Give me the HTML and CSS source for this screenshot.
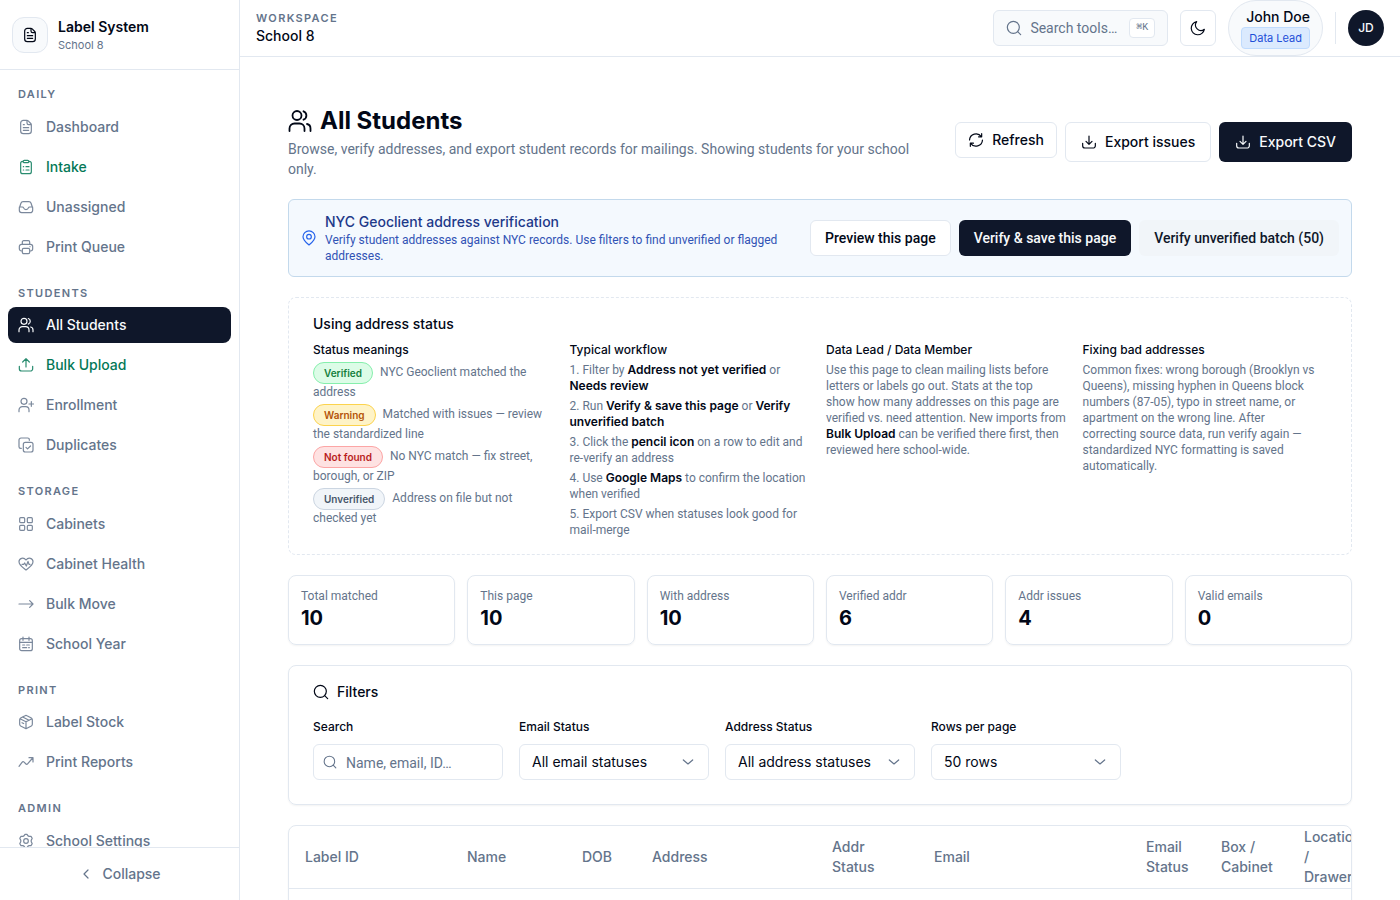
FILE: index.html
```html
<!DOCTYPE html>
<html lang="en">
<head>
<meta charset="utf-8">
<title>All Students – Label System</title>
<link rel="stylesheet" href="styles.css">
</head>
<body>
<svg class="sprite" aria-hidden="true">
  <symbol id="i-file" viewBox="0 0 24 24"><path d="M4 6a4 4 0 0 1 4-4h5.2a3 3 0 0 1 2.1.9l3.8 3.8A3 3 0 0 1 20 8.800V18a4 4 0 0 1-4 4H8a4 4 0 0 1-4-4ZM13.500 2.500V6a2.500 2.500 0 0 0 2.500 2.500h3.500M8 17h8M8 13h8M8 8.500h1.500"/></symbol>
  <symbol id="i-clip" viewBox="0 0 24 24"><path d="M8 3.500H7a3 3 0 0 0-3 3V19a3 3 0 0 0 3 3h10a3 3 0 0 0 3-3V6.500a3 3 0 0 0-3-3h-1M9.500 2h5a1.750 1.750 0 0 1 0 3.500h-5a1.750 1.750 0 0 1 0-3.500ZM8 11.500h.5M8 16.500h.5M12 11.500h4.500M12 16.500h4.500"/></symbol>
  <symbol id="i-inbox" viewBox="0 0 24 24"><path d="M2 13.500 4.400 6.300A3.500 3.500 0 0 1 7.700 4h8.600a3.500 3.500 0 0 1 3.300 2.300L22 13.500V17a3.500 3.500 0 0 1-3.500 3.500h-13A3.500 3.500 0 0 1 2 17Zm0-1.500h4.500a2 2 0 0 1 1.900 1.300 3.800 3.800 0 0 0 7.200 0A2 2 0 0 1 17.500 12H22"/></symbol>
  <symbol id="i-print" viewBox="0 0 24 24"><path d="M6.500 18H5.200A3.200 3.200 0 0 1 2 14.800v-3.600A3.200 3.200 0 0 1 5.200 8h13.600a3.200 3.200 0 0 1 3.200 3.200v3.600a3.200 3.200 0 0 1-3.200 3.200h-1.300M6.500 8V4.500a2 2 0 0 1 2-2h7a2 2 0 0 1 2 2V8M8.500 14h7a2 2 0 0 1 2 2v4a2 2 0 0 1-2 2h-7a2 2 0 0 1-2-2v-4a2 2 0 0 1 2-2ZM18 11.500h.01"/></symbol>
  <symbol id="i-users" viewBox="0 0 24 24"><circle cx="9" cy="6.500" r="4.500"/><path d="M1.500 22v-2.500a5 5 0 0 1 5-5h5a5 5 0 0 1 5 5V22M15.500 2.300a4.500 4.500 0 0 1 0 8.400M19 15a4.500 4.500 0 0 1 3.500 4.500V22"/></symbol>
  <symbol id="i-upload" viewBox="0 0 24 24"><path d="M12 15V2.500M7 7.500l5-5 5 5M2 14v3.500A3.500 3.500 0 0 0 5.500 21h13a3.500 3.500 0 0 0 3.500-3.500V14"/></symbol>
  <symbol id="i-download" viewBox="0 0 24 24"><path d="M12 3v12.500M7.500 11l4.500 4.500 4.500-4.500M2.500 14v3.500A3.500 3.500 0 0 0 6 21h12a3.500 3.500 0 0 0 3.500-3.500V14"/></symbol>
  <symbol id="i-useradd" viewBox="0 0 24 24"><circle cx="9" cy="6.500" r="4.500"/><path d="M1.500 22v-2.500a5 5 0 0 1 5-5h5a5 5 0 0 1 5 5V22M16.500 10.500h7M20 7v7"/></symbol>
  <symbol id="i-copy" viewBox="0 0 24 24"><rect x="8" y="8" width="14.500" height="14.500" rx="3"/><path d="M17 5V4a2.500 2.500 0 0 0-2.500-2.500H4.500a3 3 0 0 0-3 3v10A2.500 2.500 0 0 0 4 17h1M12 15.500l2.300 2.300 4.500-4.300"/></symbol>
  <symbol id="i-grid" viewBox="0 0 24 24"><rect x="2.500" y="2.500" width="7.500" height="7.500" rx="1.500"/><rect x="14" y="2.500" width="7.500" height="7.500" rx="1.500"/><rect x="2.500" y="14" width="7.500" height="7.500" rx="1.500"/><rect x="14" y="14" width="7.500" height="7.500" rx="1.500"/></symbol>
  <symbol id="i-heart" viewBox="0 0 24 24"><path d="M12 21C8 18 1.500 14 1.500 8.800 1.500 3 8.500 1.500 12 6c3.500-4.500 10.500-3 10.500 2.800C22.500 14 16 18 12 21ZM6 12.500h2.500l1.500-2 2.500 4.500 2.500-7 1.500 4.500H18"/></symbol>
  <symbol id="i-arrow" viewBox="0 0 24 24"><path d="M1.500 12h21M17.500 7l5 5-5 5"/></symbol>
  <symbol id="i-cal" viewBox="0 0 24 24"><rect x="2.500" y="4" width="19" height="18" rx="3"/><path d="M7.500 1.500v5M16.500 1.500v5M2.500 9.500h19M7 13.500h3M13 13.500h4M7 17.500h6M16 17.500h1"/></symbol>
  <symbol id="i-box" viewBox="0 0 24 24"><path d="M12 22 4 18a3 3 0 0 1-1.500-2.500v-7A3 3 0 0 1 4 6l6.500-3.500a3 3 0 0 1 3 0L20 6a3 3 0 0 1 1.500 2.500v7A3 3 0 0 1 20 18ZM3 7l9 4.500L21 7M12 11.500V22M7 4.500l9.500 5M6 13l2.500 1.300"/></symbol>
  <symbol id="i-trend" viewBox="0 0 24 24"><path d="M1.500 18.500 6 12.500c1.200-1.500 2-1.400 3.200-.2l2.300 2.300c1.200 1.200 2 1.200 3.200-.2L22 6M16.500 5.500H22.500V12"/></symbol>
  <symbol id="i-gear" viewBox="0 0 24 24"><path d="m9.500 3.500 1-1.500h3l1 1.500a3 3 0 0 0 3 1.500h2l1.800 2.800-1 2.200a4 4 0 0 0 0 4l1 2.200L19.500 19h-2a3 3 0 0 0-3 1.500l-1 1.500h-3l-1-1.500a3 3 0 0 0-3-1.500h-2l-1.800-2.800 1-2.200a4 4 0 0 0 0-4l-1-2.200L4.500 5h2a3 3 0 0 0 3-1.500Z"/><circle cx="12" cy="12" r="3.500"/></symbol>
  <symbol id="i-left" viewBox="0 0 24 24"><path d="m15 6-6 6 6 6"/></symbol>
  <symbol id="i-down" viewBox="0 0 24 24"><path d="m5 9 7 6 7-6"/></symbol>
  <symbol id="i-search" viewBox="0 0 24 24"><circle cx="11" cy="11" r="9"/><path d="m17.500 17.500 4.500 4.500"/></symbol>
  <symbol id="i-moon" viewBox="0 0 24 24"><path d="M21.500 14A9.900 9.900 0 1 1 10 2.500 8.200 8.200 0 0 0 21.500 14Z"/></symbol>
  <symbol id="i-refresh" viewBox="0 0 24 24"><path d="M20.500 2.500v4.700h-4.700M20 7A9.700 9.700 0 0 0 2.300 12M3.500 21.500v-4.700h4.700M4 17a9.700 9.700 0 0 0 17.700-5"/></symbol>
  <symbol id="i-pin" viewBox="0 0 24 24"><path d="M12 22.500C8 19 3 15 3 10a9 8.700 0 0 1 18 0c0 5-5 9-9 12.500Z"/><circle cx="12" cy="10" r="3.500"/></symbol>
</svg>

<div class="app">
  <aside class="sidebar">
    <div class="brand">
      <span class="brand-logo"><svg class="icon"><use href="#i-file"/></svg></span>
      <div>
        <div class="brand-name">Label System</div>
        <div class="brand-sub">School 8</div>
      </div>
    </div>
    <nav class="nav">
      <section class="nav-group">
        <h2 class="eyebrow nav-title">Daily</h2>
        <a class="nav-item" href="#"><svg class="icon"><use href="#i-file"/></svg>Dashboard</a>
        <a class="nav-item nav-green" href="#"><svg class="icon"><use href="#i-clip"/></svg>Intake</a>
        <a class="nav-item" href="#"><svg class="icon"><use href="#i-inbox"/></svg>Unassigned</a>
        <a class="nav-item" href="#"><svg class="icon"><use href="#i-print"/></svg>Print Queue</a>
      </section>
      <section class="nav-group">
        <h2 class="eyebrow nav-title">Students</h2>
        <a class="nav-item nav-active" href="#"><svg class="icon"><use href="#i-users"/></svg>All Students</a>
        <a class="nav-item nav-green" href="#"><svg class="icon"><use href="#i-upload"/></svg>Bulk Upload</a>
        <a class="nav-item" href="#"><svg class="icon"><use href="#i-useradd"/></svg>Enrollment</a>
        <a class="nav-item" href="#"><svg class="icon"><use href="#i-copy"/></svg>Duplicates</a>
      </section>
      <section class="nav-group">
        <h2 class="eyebrow nav-title">Storage</h2>
        <a class="nav-item" href="#"><svg class="icon"><use href="#i-grid"/></svg>Cabinets</a>
        <a class="nav-item" href="#"><svg class="icon"><use href="#i-heart"/></svg>Cabinet Health</a>
        <a class="nav-item" href="#"><svg class="icon"><use href="#i-arrow"/></svg>Bulk Move</a>
        <a class="nav-item" href="#"><svg class="icon"><use href="#i-cal"/></svg>School Year</a>
      </section>
      <section class="nav-group">
        <h2 class="eyebrow nav-title">Print</h2>
        <a class="nav-item" href="#"><svg class="icon"><use href="#i-box"/></svg>Label Stock</a>
        <a class="nav-item" href="#"><svg class="icon"><use href="#i-trend"/></svg>Print Reports</a>
      </section>
      <section class="nav-group">
        <h2 class="eyebrow nav-title">Admin</h2>
        <a class="nav-item" href="#"><svg class="icon"><use href="#i-gear"/></svg>School Settings</a>
      </section>
    </nav>
    <div class="sidebar-foot">
      <button class="collapse" type="button"><svg class="icon"><use href="#i-left"/></svg>Collapse</button>
    </div>
  </aside>

  <div class="page">
    <header class="topbar">
      <div class="workspace">
        <div class="eyebrow">Workspace</div>
        <div class="workspace-name">School 8</div>
      </div>
      <div class="top-actions">
        <button class="tool-search" type="button"><svg class="icon"><use href="#i-search"/></svg><span>Search tools…</span><kbd>⌘K</kbd></button>
        <button class="theme" type="button" aria-label="Toggle theme"><svg class="icon"><use href="#i-moon"/></svg></button>
        <div class="user">
          <span class="user-name">John Doe</span>
          <span class="user-role">Data Lead</span>
        </div>
        <span class="divider"></span>
        <button class="avatar" type="button">JD</button>
      </div>
    </header>

    <main class="content">
      <div class="page-head">
        <div class="page-intro">
          <h1><svg class="icon icon-lg"><use href="#i-users"/></svg>All Students</h1>
          <p>Browse, verify addresses, and export student records for mailings. Showing students for your school only.</p>
        </div>
        <div class="page-actions">
          <button class="btn btn-outline" type="button"><svg class="icon"><use href="#i-refresh"/></svg>Refresh</button>
          <button class="btn btn-outline btn-lg" type="button"><svg class="icon"><use href="#i-download"/></svg>Export issues</button>
          <button class="btn btn-dark btn-lg" type="button"><svg class="icon"><use href="#i-download"/></svg>Export CSV</button>
        </div>
      </div>

      <section class="banner">
        <svg class="icon banner-icon"><use href="#i-pin"/></svg>
        <div class="banner-text">
          <h2>NYC Geoclient address verification</h2>
          <p>Verify student addresses against NYC records. Use filters to find unverified or flagged addresses.</p>
        </div>
        <div class="banner-actions">
          <button class="btn btn-outline" type="button">Preview this page</button>
          <button class="btn btn-dark" type="button">Verify &amp; save this page</button>
          <button class="btn btn-soft" type="button">Verify unverified batch (50)</button>
        </div>
      </section>

      <section class="guide">
        <h2>Using address status</h2>
        <div class="guide-grid">
          <div>
            <h3>Status meanings</h3>
            <ul class="meanings">
              <li><span class="badge badge-green">Verified</span> NYC Geoclient matched the address</li>
              <li><span class="badge badge-amber">Warning</span> Matched with issues — review the standardized line</li>
              <li><span class="badge badge-red">Not found</span> No NYC match — fix street, borough, or ZIP</li>
              <li><span class="badge badge-slate">Unverified</span> Address on file but not<br>checked yet</li>
            </ul>
          </div>
          <div>
            <h3>Typical workflow</h3>
            <ul>
              <li>1. Filter by <strong>Address not yet verified</strong> or <strong>Needs review</strong></li>
              <li>2. Run <strong>Verify &amp; save this page</strong> or <strong>Verify unverified batch</strong></li>
              <li>3. Click the <strong>pencil icon</strong> on a row to edit and re-verify an address</li>
              <li>4. Use <strong>Google Maps</strong> to confirm the location when verified</li>
              <li>5. Export CSV when statuses look good for mail-merge</li>
            </ul>
          </div>
          <div>
            <h3>Data Lead / Data Member</h3>
            <p>Use this page to clean mailing lists before letters or labels go out. Stats at the top<br>show how many addresses on this page are<br>verified vs. need attention. New imports from <strong>Bulk Upload</strong> can be verified there first, then reviewed here school-wide.</p>
          </div>
          <div>
            <h3>Fixing bad addresses</h3>
            <p>Common fixes: wrong borough (Brooklyn vs Queens), missing hyphen in Queens block numbers (87-05), typo in street name, or apartment on the wrong line. After<br>correcting source data, run verify again — standardized NYC formatting is saved<br>automatically.</p>
          </div>
        </div>
      </section>

      <section class="stats">
        <div class="stat"><span>Total matched</span><b>10</b></div>
        <div class="stat"><span>This page</span><b>10</b></div>
        <div class="stat"><span>With address</span><b>10</b></div>
        <div class="stat"><span>Verified addr</span><b>6</b></div>
        <div class="stat"><span>Addr issues</span><b>4</b></div>
        <div class="stat"><span>Valid emails</span><b>0</b></div>
      </section>

      <section class="filters">
        <h2><svg class="icon"><use href="#i-search"/></svg>Filters</h2>
        <div class="filter-grid">
          <div class="field">
            <label for="f-search">Search</label>
            <div class="control control-search"><svg class="icon"><use href="#i-search"/></svg><input id="f-search" type="text" placeholder="Name, email, ID…"></div>
          </div>
          <div class="field">
            <label for="f-email">Email Status</label>
            <div class="control"><select id="f-email"><option>All email statuses</option></select><svg class="icon"><use href="#i-down"/></svg></div>
          </div>
          <div class="field">
            <label for="f-addr">Address Status</label>
            <div class="control"><select id="f-addr"><option>All address statuses</option></select><svg class="icon"><use href="#i-down"/></svg></div>
          </div>
          <div class="field">
            <label for="f-rows">Rows per page</label>
            <div class="control"><select id="f-rows"><option>50 rows</option></select><svg class="icon"><use href="#i-down"/></svg></div>
          </div>
        </div>
      </section>

      <section class="table-card">
        <table>
          <colgroup><col class="c-label"><col class="c-name"><col class="c-dob"><col class="c-address"><col class="c-addr-status"><col class="c-email"><col class="c-email-status"><col class="c-box"><col class="c-location"></colgroup>
          <thead>
            <tr><th>Label ID</th><th>Name</th><th>DOB</th><th>Address</th><th>Addr Status</th><th>Email</th><th>Email Status</th><th>Box / Cabinet</th><th>Location / Drawer</th></tr>
          </thead>
          <tbody><tr><td colspan="9"></td></tr></tbody>
        </table>
      </section>
    </main>
  </div>
</div>
</body>
</html>
```
FILE: styles.css
```css
:root {
  --ink: #020817;
  --navy: #0f172a;
  --muted: #64748b;
  --line: #e2e8f0;
  --ui: Inter, "Liberation Sans", sans-serif;
  --prose: Roboto, "Liberation Sans", sans-serif;
}
* { box-sizing: border-box; margin: 0; }
body {
  font: 14px/20px var(--ui);
  color: var(--ink);
  background: #fff;
}
button, input, select { font: inherit; color: inherit; }
button { cursor: pointer; }
a { color: inherit; text-decoration: none; }
ul { list-style: none; padding: 0; }
.sprite { display: none; }
.icon {
  width: 16px;
  height: 16px;
  flex: none;
  fill: none;
  stroke: currentColor;
  stroke-width: 1.8;
  stroke-linecap: round;
  stroke-linejoin: round;
}
.icon-lg { width: 24px; height: 24px; }
.eyebrow {
  font-size: 11px;
  line-height: 1.5;
  font-weight: 600;
  letter-spacing: 0.12em;
  text-transform: uppercase;
  color: var(--muted);
}

.app { display: flex; height: 100vh; overflow: hidden; }

/* Sidebar */
.sidebar {
  width: 240px;
  flex: none;
  display: flex;
  flex-direction: column;
  border-right: 1px solid var(--line);
}
.brand {
  display: flex;
  align-items: center;
  gap: 10px;
  min-height: 70px;
  padding: 0 12px;
  border-bottom: 1px solid var(--line);
}
.brand-logo {
  display: grid;
  place-items: center;
  width: 36px;
  height: 36px;
  border: 1px solid var(--line);
  border-radius: 12px;
  background: #f8fafc;
}
.brand-name { font-weight: 600; }
.brand-sub { font-size: 11px; line-height: 16px; color: var(--muted); }
.nav {
  flex: 1;
  min-height: 0;
  overflow: hidden;
  display: flex;
  flex-direction: column;
  gap: 20px;
  padding: 16px 8px 0;
}
.nav-group { display: flex; flex-direction: column; gap: 4px; }
.nav-title { padding: 0 10px 2px; }
.nav-item {
  display: flex;
  align-items: center;
  gap: 12px;
  height: 36px;
  flex: none;
  padding: 0 10px;
  border-radius: 8px;
  font-weight: 500;
  color: var(--muted);
}
.nav-item .icon { opacity: 0.85; }
.nav-green { color: #047857; }
.nav-active { background: var(--navy); color: #f8fafc; }
.nav-active .icon { opacity: 1; }
.sidebar-foot { padding: 8px; border-top: 1px solid var(--line); }
.collapse {
  display: flex;
  align-items: center;
  justify-content: center;
  gap: 8px;
  width: 100%;
  height: 36px;
  border: 0;
  background: none;
  font-weight: 500;
  color: var(--muted);
}

/* Top bar */
.page { flex: 1; min-width: 0; display: flex; flex-direction: column; }
.topbar {
  display: flex;
  align-items: center;
  justify-content: space-between;
  height: 57px;
  flex: none;
  padding: 0 16px;
  border-bottom: 1px solid var(--line);
}
.workspace-name { font-weight: 500; }
.top-actions { display: flex; align-items: center; gap: 12px; }
.tool-search {
  display: flex;
  align-items: center;
  gap: 8px;
  height: 36px;
  padding: 0 12px;
  border: 1px solid var(--line);
  border-radius: 6px;
  background: #f8fafc;
  font-family: var(--prose);
  color: var(--muted);
}
.tool-search kbd {
  margin-left: 4px;
  padding: 0 6px;
  border: 1px solid var(--line);
  border-radius: 4px;
  background: #fff;
  font: 500 10px/18px "Liberation Mono", monospace;
}
.theme {
  display: grid;
  place-items: center;
  width: 36px;
  height: 36px;
  padding: 0;
  border: 1px solid var(--line);
  border-radius: 6px;
  background: #fff;
}
.user {
  display: flex;
  flex-direction: column;
  align-items: flex-end;
  padding: 6px 12px;
  border: 1px solid var(--line);
  border-radius: 28px;
  background: #f8fafc;
}
.user-name { font-weight: 500; }
.user-role {
  padding: 0 7px;
  border: 1px solid #bfdbfe;
  border-radius: 4px;
  background: #dbeafe;
  font-size: 11px;
  line-height: 20px;
  color: #1d4ed8;
}
.divider { width: 1px; height: 32px; background: var(--line); }
.avatar {
  width: 36px;
  height: 36px;
  padding: 0;
  border: 0;
  border-radius: 50%;
  background: var(--navy);
  color: #f8fafc;
  font-size: 12px;
  font-weight: 500;
}

/* Content */
.content {
  flex: 1;
  min-height: 0;
  overflow: hidden;
  display: flex;
  flex-direction: column;
  gap: 20px;
  padding: 48px 48px 0;
}
.content > * { flex: none; }
.page-head { display: flex; align-items: center; gap: 16px; }
.page-intro { flex: 1; display: grid; gap: 2px; }
.page-intro h1 {
  display: flex;
  align-items: center;
  gap: 8px;
  font-size: 24px;
  line-height: 32px;
  font-weight: 700;
}
.page-intro p { font-family: var(--prose); color: var(--muted); }
.page-actions { display: flex; align-items: flex-start; gap: 8px; }
.btn {
  display: flex;
  align-items: center;
  gap: 8px;
  height: 36px;
  padding: 0 12px;
  border: 1px solid transparent;
  border-radius: 6px;
  font-weight: 500;
  white-space: nowrap;
}
.btn-lg { height: 40px; padding: 0 15px; }
.btn-outline { background: #fff; border-color: var(--line); }
.btn-dark { background: var(--navy); color: #f8fafc; }
.btn-soft { background: #f1f5f9; color: var(--navy); }

.banner {
  display: flex;
  align-items: center;
  gap: 8px;
  padding: 12px;
  border: 1px solid #c3d9ec;
  border-radius: 6px;
  background: #f4f9fe;
}
.banner-icon { color: #2563eb; }
.banner-text { flex: 1; }
.banner h2 { font-size: 14px; font-weight: 500; color: #1e3a8a; }
.banner p { font-family: var(--prose); font-size: 12px; line-height: 16px; color: #3153b5; }
.banner-actions { display: flex; gap: 8px; font-family: var(--prose); }
.banner-actions .btn { padding: 0 14px; }

.guide {
  padding: 16px 24px;
  border: 1px dashed var(--line);
  border-radius: 8px;
  font-family: var(--prose);
  font-size: 12px;
  line-height: 16px;
  color: var(--muted);
}
.guide h2 { margin-bottom: 8px; font: 500 14px/20px var(--ui); color: var(--ink); }
.guide h3 { margin-bottom: 4px; font: 500 12px/16px var(--ui); color: var(--ink); }
.guide strong { font-family: var(--ui); font-weight: 600; color: var(--ink); }
.guide-grid { display: grid; grid-template-columns: repeat(4, 1fr); gap: 12px; }
.guide ul { display: grid; gap: 4px; }
.badge {
  display: inline-block;
  margin-right: 4px;
  padding: 0 10px;
  border: 1px solid;
  border-radius: 11px;
  font: 600 10px/20px var(--ui);
  vertical-align: middle;
}
.badge-green { background: #dcfce7; border-color: #86efac; color: #15803d; }
.badge-amber { background: #fef3c7; border-color: #fcd34d; color: #b45309; }
.badge-red { background: #fee2e2; border-color: #fca5a5; color: #b91c1c; }
.badge-slate { background: #f1f5f9; border-color: #cbd5e1; color: #475569; }

.stats { display: grid; grid-template-columns: repeat(6, 1fr); gap: 12px; }
.stat, .filters, .table-card {
  border: 1px solid var(--line);
  border-radius: 8px;
  box-shadow: 0 1px 2px rgba(0, 0, 0, 0.05);
}
.stat { display: grid; padding: 12px; }
.stat span { font-family: var(--prose); font-size: 12px; line-height: 16px; color: var(--muted); }
.stat b { font-size: 20px; line-height: 28px; font-weight: 700; }

.filters { padding: 16px 24px 24px; }
.filters h2 {
  display: flex;
  align-items: center;
  gap: 8px;
  margin-bottom: 16px;
  font-size: 14px;
  font-weight: 500;
}
.filter-grid { display: grid; grid-template-columns: repeat(5, 1fr); gap: 16px; }
.field { display: grid; gap: 8px; }
.field label { font-size: 12px; line-height: 18px; font-weight: 500; }
.control { display: grid; align-items: center; }
.control > * { grid-area: 1 / 1; }
.control .icon { justify-self: end; margin-right: 13px; color: var(--muted); pointer-events: none; }
.control-search .icon { justify-self: start; width: 14px; height: 14px; margin: 0 0 0 10px; }
.control input, .control select {
  width: 100%;
  height: 36px;
  padding: 0 12px;
  border: 1px solid var(--line);
  border-radius: 6px;
  background: transparent;
  appearance: none;
}
.control input { padding-left: 32px; }
.control input::placeholder { font-family: var(--prose); color: var(--muted); opacity: 1; }

.table-card { overflow: hidden; }
table { table-layout: fixed; width: 1084px; border-collapse: collapse; }
.c-label { width: 162px; }
.c-name { width: 115px; }
.c-dob { width: 70px; }
.c-address { width: 180px; }
.c-addr-status { width: 102px; }
.c-email { width: 212px; }
.c-email-status { width: 75px; }
.c-box { width: 83px; }
.c-location { width: 85px; }
th {
  height: 62px;
  padding: 0 16px;
  border-bottom: 1px solid var(--line);
  text-align: left;
  font-weight: 500;
  color: var(--muted);
}
td { height: 64px; }
```
